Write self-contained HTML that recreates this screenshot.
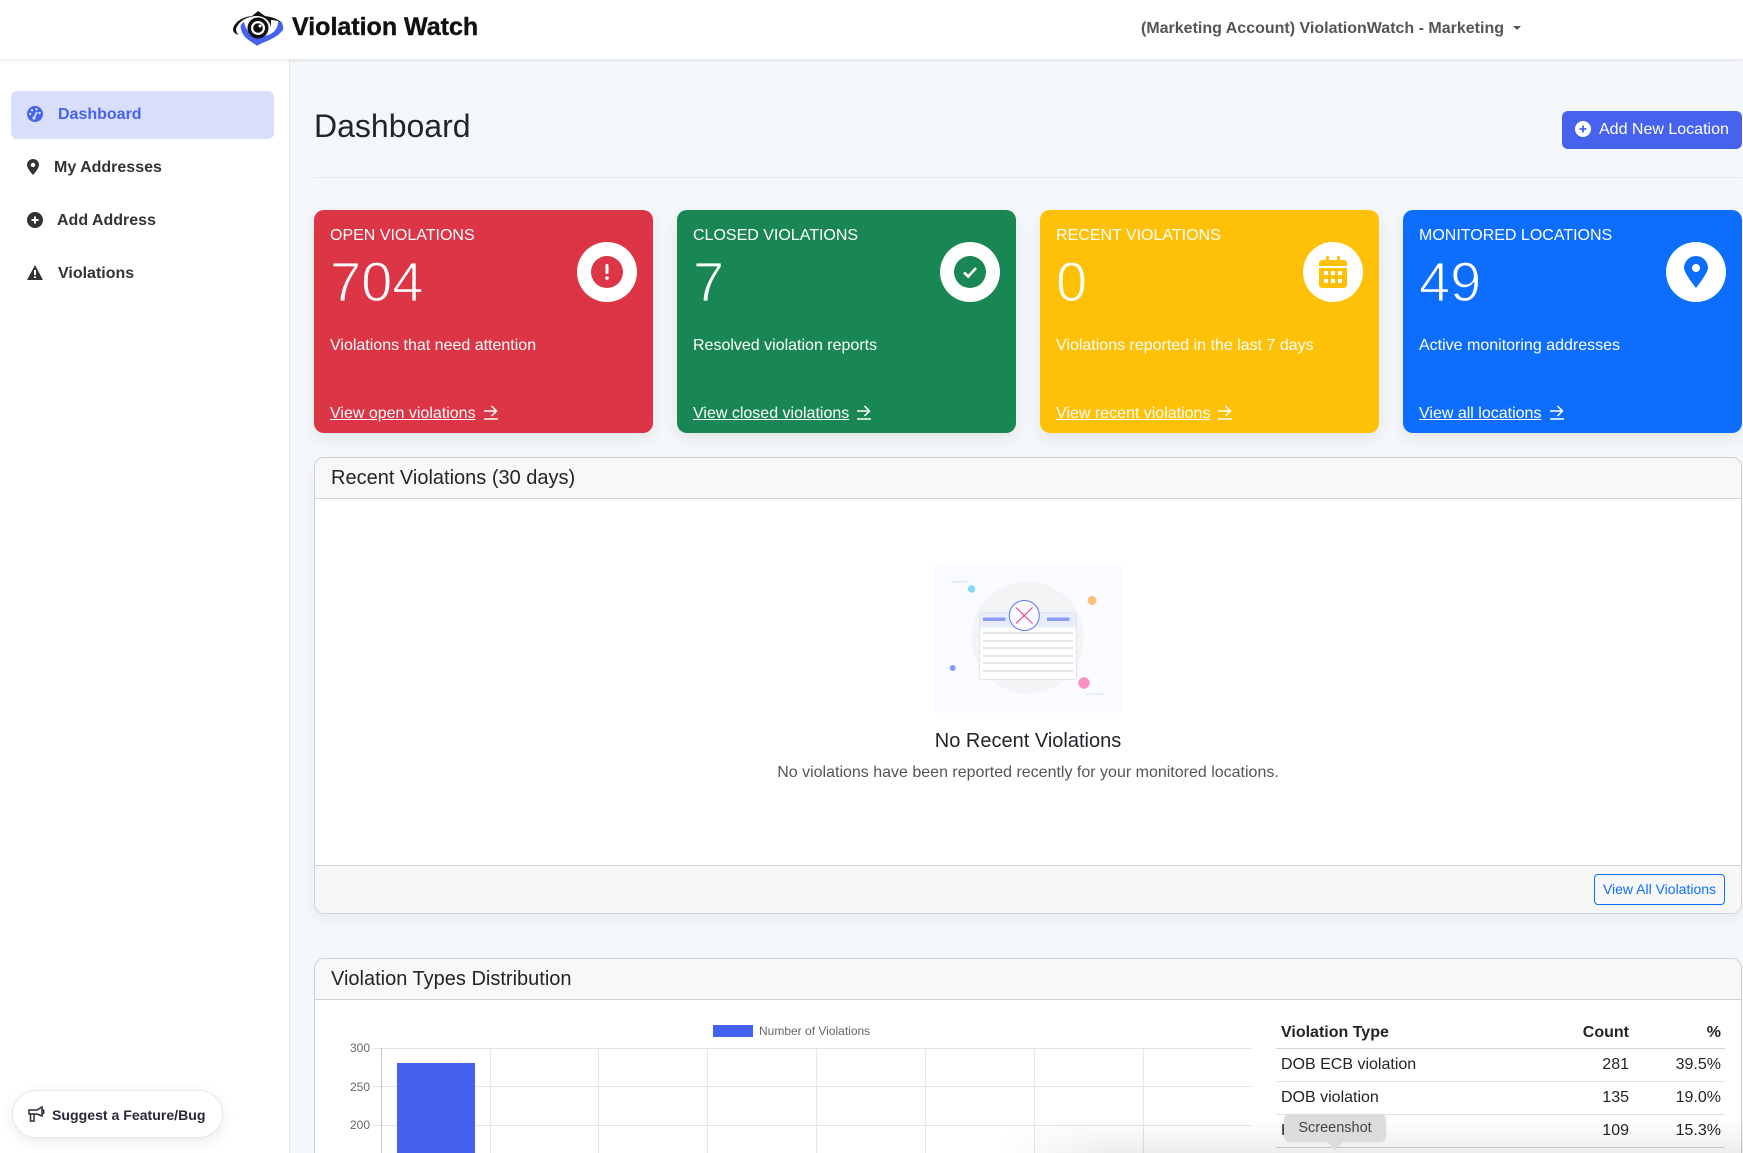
<!DOCTYPE html>
<html><head><meta charset="utf-8"><title>Violation Watch Dashboard</title>
<style>
*{box-sizing:border-box}
html,body{margin:0;padding:0;width:1743px;height:1153px;overflow:hidden;background:#f5f8fb;font-family:"Liberation Sans",sans-serif;color:#212529}
#w{position:relative;width:1743px;height:1153px;overflow:hidden;background:#f5f8fb}
.a{position:absolute;white-space:nowrap}
svg{position:absolute;display:block}
.nav{font-weight:700;font-size:16px;color:#333;line-height:20px}
.card{position:absolute;top:210px;height:223px;border-radius:10px;box-shadow:0 6px 16px rgba(0,0,0,.08);color:#fff}
.card .t{position:absolute;left:16px;top:16px;font-size:16px;line-height:20px;white-space:nowrap}
.card .n{position:absolute;left:16px;top:40px;font-size:56px;line-height:64px;white-space:nowrap}
.card .s{position:absolute;left:16px;top:125.5px;font-size:16px;line-height:20px;white-space:nowrap}
.card .l{position:absolute;left:16px;top:193.5px;font-size:16px;line-height:20px;white-space:nowrap;text-decoration:underline}
.card .c{position:absolute;top:32px;width:60px;height:60px;border-radius:50%;background:#fff}
.panel{position:absolute;left:314px;width:1428px;background:#fff;border:1px solid #cfd1d3;border-radius:10px;overflow:hidden}
.ph{position:absolute;left:0;top:0;right:0;background:#f8f8f8;border-bottom:1px solid #cfd1d3;font-size:20px;line-height:24px;padding:8px 16px;height:41px}
.tx{font-size:16px;line-height:20px}
.hl{position:absolute;background:#e2e3e6;height:1px}
.vl{position:absolute;background:#e6e6e6;width:1px;top:1048px;height:105px}
.tk{position:absolute;width:40px;left:330px;text-align:right;font-size:12px;line-height:14px;color:#666}
.ln{position:absolute;left:1276px;width:449px;height:1px;background:#dee0e4}
</style></head><body><div id="w">

<!-- header -->
<div class="a" style="left:0;top:0;width:1743px;height:59px;background:#fff;box-shadow:0 1px 4px rgba(0,0,0,.1);z-index:3"></div>
<svg style="left:231px;top:9px;z-index:4" width="54" height="38" viewBox="0 0 54 38">
 <path d="M10 20 C12 30 22 33 26 37 C31 33 44 31 52 21 C53 17 51 13 47 11 C48 19 42 26 33 27 C24 28 16 26 13 13 C10 15 9 17 10 20Z" fill="#4763ee"/>
 <path d="M2 20 C4 12 12 8 21 7 L27 2 L34 7 C42 8 49 11 52 15 C49 12 44 11 40 11 L40 18 C38 9 30 7 26 7 C18 7 8 11 5 20 C5 22 6 25 8 26 C4 25 2 23 2 20Z" fill="#111"/>
 <circle cx="27" cy="19" r="10.5" fill="#111"/><circle cx="27" cy="19" r="7" fill="#fff"/><circle cx="27" cy="19" r="4.8" fill="#111"/><circle cx="29" cy="17" r="1.5" fill="#fff"/>
</svg>
<div class="a" style="left:292px;top:12px;font-size:25px;line-height:30px;font-weight:700;color:#111;z-index:4;-webkit-text-stroke:.4px #111">Violation Watch</div>
<div class="a" style="left:1141px;top:19px;font-size:16px;line-height:20px;font-weight:700;color:#555;z-index:4">(Marketing Account) ViolationWatch - Marketing</div>
<div class="a" style="left:1513px;top:26px;width:0;height:0;border-left:4px solid transparent;border-right:4px solid transparent;border-top:4px solid #555;z-index:4"></div>

<!-- sidebar -->
<div class="a" style="left:0;top:0;width:290px;height:1153px;background:#fff;border-right:1px solid #e4e7eb"></div>
<div class="a" style="left:11px;top:91px;width:263px;height:48px;background:#d9dffb;border-radius:6px"></div>
<svg style="left:27px;top:106px" width="16" height="16" viewBox="0 0 16 16"><circle cx="8" cy="8" r="8" fill="#4763ee"/><circle cx="5" cy="4.2" r="1.2" fill="#d9dffb"/><circle cx="9.5" cy="3.2" r="1.2" fill="#d9dffb"/><circle cx="3.2" cy="8" r="1.2" fill="#d9dffb"/><circle cx="12.6" cy="7" r="1.2" fill="#d9dffb"/><path d="M7 12 L10 6" stroke="#d9dffb" stroke-width="1.8"/><circle cx="7" cy="12" r="1.6" fill="#d9dffb"/></svg>
<div class="a nav" style="left:58px;top:105px;color:#4763ee">Dashboard</div>
<svg style="left:27px;top:159px" width="12" height="16" viewBox="0 0 12 16"><path fill-rule="evenodd" d="M6 16S12 9.5 12 6A6 6 0 0 0 0 6C0 9.5 6 16 6 16ZM6 8.2A2.2 2.2 0 1 1 6 3.8 2.2 2.2 0 0 1 6 8.2Z" fill="#333"/></svg>
<div class="a nav" style="left:54px;top:158px">My Addresses</div>
<svg style="left:27px;top:212px" width="16" height="16" viewBox="0 0 16 16"><circle cx="8" cy="8" r="8" fill="#333"/><path d="M8 4.5V11.5M4.5 8H11.5" stroke="#fff" stroke-width="2"/></svg>
<div class="a nav" style="left:57px;top:211px">Add Address</div>
<svg style="left:27px;top:265px" width="16" height="15" viewBox="0 0 16 15"><path fill-rule="evenodd" d="M8 0 L16 15 H0Z M7 5 H9 V10 H7Z M7 11.2 H9 V13 H7Z" fill="#333"/></svg>
<div class="a nav" style="left:58px;top:264px">Violations</div>

<div class="a" style="left:11.5px;top:1090px;width:211px;height:48px;background:#fff;border:1px solid #e6e6e8;border-radius:24px;box-shadow:0 4px 14px rgba(0,0,0,.08)"></div>
<svg style="left:27px;top:1105px" width="18" height="18" viewBox="0 0 18 18" fill="none" stroke="#2b2838" stroke-width="1.5"><path d="M2 5 H10 L15 2 V11 L10 9 H2Z"/><path d="M15 4.5 C17.5 5 17.5 8.5 15 9"/><path d="M3.5 9 V16 H7 V9"/></svg>
<div class="a" style="left:52px;top:1105px;font-size:14.1px;line-height:20px;font-weight:700;color:#2b2838">Suggest a Feature/Bug</div>

<!-- title -->
<div class="a" style="left:314px;top:107px;font-size:32px;line-height:38px">Dashboard</div>
<div class="a" style="left:1562px;top:111px;width:180px;height:38px;background:#4763ee;border-radius:6px"></div>
<svg style="left:1575px;top:121px" width="16" height="16" viewBox="0 0 16 16"><circle cx="8" cy="8" r="8" fill="#fff"/><path d="M8 4.5V11.5M4.5 8H11.5" stroke="#4763ee" stroke-width="1.8"/></svg>
<div class="a" style="left:1599px;top:120px;font-size:16px;line-height:20px;color:#fff">Add New Location</div>
<div class="a" style="left:314px;top:177px;width:1428px;height:1px;background:#e4e7eb"></div>

<!-- cards -->
<div class="card" style="left:314px;width:339px;background:#dc3545">
 <div class="t">OPEN VIOLATIONS</div><div class="n" style="-webkit-text-stroke:1.2px #dc3545">704</div><div class="s">Violations that need attention</div><div class="l">View open violations</div>
 <svg style="left:169px;top:194px" width="16" height="16" viewBox="0 0 16 16" fill="none" stroke="#fff" stroke-width="1.5"><path d="M1 7H13M8.5 2L13.5 7 8.5 12M1 15H15"/></svg>
 <div class="c" style="left:263px"><svg style="left:14px;top:14px" width="32" height="32" viewBox="0 0 32 32"><circle cx="16" cy="16" r="16" fill="#dc3545"/><rect x="14.5" y="8" width="3" height="10" rx="1.5" fill="#fff"/><circle cx="16" cy="22" r="1.8" fill="#fff"/></svg></div>
</div>
<div class="card" style="left:677px;width:339px;background:#198754">
 <div class="t">CLOSED VIOLATIONS</div><div class="n" style="-webkit-text-stroke:1.2px #198754">7</div><div class="s">Resolved violation reports</div><div class="l">View closed violations</div>
 <svg style="left:179px;top:194px" width="16" height="16" viewBox="0 0 16 16" fill="none" stroke="#fff" stroke-width="1.5"><path d="M1 7H13M8.5 2L13.5 7 8.5 12M1 15H15"/></svg>
 <div class="c" style="left:263px"><svg style="left:14px;top:14px" width="32" height="32" viewBox="0 0 32 32"><circle cx="16" cy="16" r="16" fill="#198754"/><path d="M10 16.5L14.2 20.5 22 12" fill="none" stroke="#fff" stroke-width="2.6"/></svg></div>
</div>
<div class="card" style="left:1040px;width:339px;background:#ffc107">
 <div class="t">RECENT VIOLATIONS</div><div class="n" style="-webkit-text-stroke:1.2px #ffc107">0</div><div class="s">Violations reported in the last 7 days</div><div class="l">View recent violations</div>
 <svg style="left:177px;top:194px" width="16" height="16" viewBox="0 0 16 16" fill="none" stroke="#fff" stroke-width="1.5"><path d="M1 7H13M8.5 2L13.5 7 8.5 12M1 15H15"/></svg>
 <div class="c" style="left:263px"><svg style="left:16px;top:14px" width="28" height="32" viewBox="0 0 28 32"><path fill-rule="evenodd" d="M3 4H7V1.5A1.5 1.5 0 0 1 10 1.5V4H18V1.5A1.5 1.5 0 0 1 21 1.5V4H25A3 3 0 0 1 28 7V10H0V7A3 3 0 0 1 3 4ZM0 12H28V29A3 3 0 0 1 25 32H3A3 3 0 0 1 0 29ZM5 15V19H9V15ZM12 15V19H16V15ZM19 15V19H23V15ZM5 23V27H9V23ZM12 23V27H16V23ZM19 23V27H23V23Z" fill="#ffc107"/></svg></div>
</div>
<div class="card" style="left:1403px;width:339px;background:#0d6efd">
 <div class="t">MONITORED LOCATIONS</div><div class="n" style="-webkit-text-stroke:1.2px #0d6efd">49</div><div class="s">Active monitoring addresses</div><div class="l">View all locations</div>
 <svg style="left:146px;top:194px" width="16" height="16" viewBox="0 0 16 16" fill="none" stroke="#fff" stroke-width="1.5"><path d="M1 7H13M8.5 2L13.5 7 8.5 12M1 15H15"/></svg>
 <div class="c" style="left:263px"><svg style="left:18px;top:14px" width="24" height="32" viewBox="0 0 24 32"><path fill-rule="evenodd" d="M12 32S24 17 24 12A12 12 0 0 0 0 12C0 17 12 32 12 32ZM12 16A4 4 0 1 1 12 8 4 4 0 0 1 12 16Z" fill="#0d6efd"/></svg></div>
</div>

<!-- recent panel -->
<div class="panel" style="top:457px;height:457px;box-shadow:0 6px 16px rgba(0,0,0,.05);overflow:visible">
 <div class="ph" style="border-radius:10px 10px 0 0">Recent Violations (30 days)</div>
 <div style="position:absolute;left:0;right:0;top:407px;height:48px;background:#f7f7f7;border-top:1px solid #cfd1d3;border-radius:0 0 10px 10px"></div>
</div>
<svg style="left:934px;top:563px" width="188" height="150" viewBox="934 563 188 150">
 <rect x="934" y="563" width="188" height="150" fill="#fafbfe"/>
 <circle cx="1027.7" cy="637.7" r="56" fill="#f3f4f6"/>
 <rect x="979.5" y="612.5" width="97" height="67" rx="2" fill="#fff" stroke="#e4e5e8"/>
 <rect x="980" y="613" width="96" height="14.5" fill="#e9edfb"/>
 <rect x="983" y="617.5" width="22.5" height="3.5" fill="#8a9ff3"/><rect x="1047" y="617.5" width="22.5" height="3.5" fill="#8a9ff3"/>
 <g fill="#e6e6e8"><rect x="983" y="632" width="90" height="2"/><rect x="983" y="640" width="90" height="2"/><rect x="983" y="647" width="90" height="2"/><rect x="983" y="655" width="90" height="2"/><rect x="983" y="662" width="90" height="2"/><rect x="983" y="670" width="90" height="2"/></g>
 <circle cx="1024.3" cy="615.5" r="15" fill="#fafbff" stroke="#5b76f0"/>
 <path d="M1016 607.5L1032.5 623.5M1032.5 607.5L1016 623.5" stroke="#ef4a8a" stroke-width="1.2"/>
 <circle cx="971.5" cy="589" r="3.7" fill="#7fdcf8"/><circle cx="1092" cy="600.5" r="4.5" fill="#fdbf7a"/><circle cx="952.7" cy="668" r="3" fill="#8a9bf5"/><circle cx="1084" cy="683" r="5.7" fill="#fb90c0"/>
 <path d="M952 581.7H969M1087 694H1104" stroke="#c9d0f5" stroke-width="1.3" stroke-dasharray="1.5 1.5"/>
</svg>
<div class="a" style="left:728px;width:600px;top:728.5px;text-align:center;font-size:20px;line-height:24px">No Recent Violations</div>
<div class="a" style="left:728px;width:600px;top:763px;text-align:center;font-size:16px;line-height:20px;color:#555">No violations have been reported recently for your monitored locations.</div>
<div class="a" style="left:1594px;top:874px;width:131px;height:31px;border:1px solid #0d6efd;border-radius:4px;color:#0d6efd;font-size:14px;line-height:28px;text-align:center">View All Violations</div>

<!-- types panel -->
<div class="panel" style="top:958px;height:195px;border-bottom:0;border-radius:10px 10px 0 0"><div class="ph">Violation Types Distribution</div></div>
<div class="a" style="left:712.5px;top:1025px;width:40.5px;height:12px;background:#4361ee"></div>
<div class="a" style="left:759px;top:1024px;font-size:12px;line-height:14px;color:#666">Number of Violations</div>
<div class="tk" style="top:1041px">300</div><div class="tk" style="top:1079.5px">250</div><div class="tk" style="top:1118px">200</div>
<div class="hl" style="left:372px;top:1048px;width:880px"></div><div class="hl" style="left:372px;top:1086px;width:880px"></div><div class="hl" style="left:372px;top:1125px;width:880px"></div>
<div class="vl" style="left:381px;background:#c9c9c9"></div><div class="vl" style="left:490px"></div><div class="vl" style="left:598px"></div><div class="vl" style="left:707px"></div><div class="vl" style="left:816px"></div><div class="vl" style="left:925px"></div><div class="vl" style="left:1034px"></div><div class="vl" style="left:1143px"></div>
<div class="a" style="left:396.5px;top:1062.5px;width:78.5px;height:90.5px;background:#4361ee"></div>

<div class="a tx" style="left:1281px;top:1023px;font-weight:700">Violation Type</div>
<div class="a tx" style="left:1529px;width:100px;top:1023px;font-weight:700;text-align:right">Count</div>
<div class="a tx" style="left:1620px;width:101px;top:1023px;font-weight:700;text-align:right">%</div>
<div class="ln" style="top:1048px;background:#d4d6db"></div>
<div class="a tx" style="left:1281px;top:1054.5px">DOB ECB violation</div>
<div class="a tx" style="left:1529px;width:100px;top:1054.5px;text-align:right">281</div>
<div class="a tx" style="left:1620px;width:101px;top:1054.5px;text-align:right">39.5%</div>
<div class="ln" style="top:1081px"></div>
<div class="a tx" style="left:1281px;top:1087.5px">DOB violation</div>
<div class="a tx" style="left:1529px;width:100px;top:1087.5px;text-align:right">135</div>
<div class="a tx" style="left:1620px;width:101px;top:1087.5px;text-align:right">19.0%</div>
<div class="ln" style="top:1114px"></div>
<div class="a tx" style="left:1281px;top:1120.5px">HPD violation</div>
<div class="a tx" style="left:1529px;width:100px;top:1120.5px;text-align:right">109</div>
<div class="a tx" style="left:1620px;width:101px;top:1120.5px;text-align:right">15.3%</div>
<div class="ln" style="top:1147px;background:#cfd1d5"></div>

<!-- bottom fade and tooltip -->
<div class="a" style="left:1000px;top:1118px;width:743px;height:35px;background:linear-gradient(to bottom,rgba(0,0,0,0),rgba(0,0,0,.07));-webkit-mask-image:linear-gradient(to right,transparent,#000 110px);mask-image:linear-gradient(to right,transparent,#000 110px);z-index:5"></div>
<div class="a" style="left:1284px;top:1114px;width:102px;height:28px;background:#dcdcdc;border-radius:6px;color:#444;font-size:14.5px;line-height:29.5px;text-align:center;z-index:6;box-shadow:0 0 2px rgba(0,0,0,.08)">Screenshot</div>
<div class="a" style="left:1327px;top:1142px;width:0;height:0;border-left:8px solid transparent;border-right:8px solid transparent;border-top:8px solid #dcdcdc;z-index:6"></div>
</div></body></html>
